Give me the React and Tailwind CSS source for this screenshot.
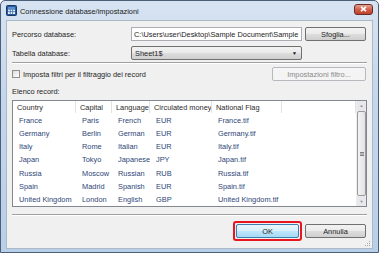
import React from "react";

const rows = [
  ["France", "Paris", "French", "EUR", "France.tif"],
  ["Germany", "Berlin", "German", "EUR", "Germany.tif"],
  ["Italy", "Rome", "Italian", "EUR", "Italy.tif"],
  ["Japan", "Tokyo", "Japanese", "JPY", "Japan.tif"],
  ["Russia", "Moscow", "Russian", "RUB", "Russia.tif"],
  ["Spain", "Madrid", "Spanish", "EUR", "Spain.tif"],
  ["United Kingdom", "London", "English", "GBP", "United Kingdom.tif"],
];
const rowH = ["h-[13px]", "h-[13px]", "h-[13px]", "h-[14px]", "h-[13px]", "h-[13px]", "h-[13px]"];

const btn =
  "flex items-center justify-center rounded-[2px] border border-[#707070] bg-[linear-gradient(#f2f2f2_0%,#ebebeb_48%,#dddddd_52%,#cfcfcf_100%)] text-[#1e1e1e]";

export default function App() {
  return (
    <div
      className="w-[379px] h-[253px] overflow-hidden bg-white"
      style={{ fontFamily: '"Liberation Sans", Arial, sans-serif' }}
    >
      <div className="w-[379px] h-[253px] rounded-t-[5px] border border-[#4a5f78] bg-[linear-gradient(#d7e3f1,#c4d6ec_40%,#b9cfe8)] flex flex-col">
        {/* title bar */}
        <div className="h-[19px] flex items-center pl-[5px] pr-[5px] shrink-0">
          <svg width="11" height="11" viewBox="0 0 11 11" className="shrink-0">
            <rect x="0.5" y="0.5" width="10" height="10" rx="1" fill="#2a5a9a" stroke="#163a6a" />
            <rect x="2" y="2" width="7" height="7" fill="#e8f0fa" />
            <path d="M2 4.3h7M2 6.6h7M4.3 4.3v4.7M6.6 4.3v4.7" stroke="#3b6fb0" strokeWidth="0.8" />
            <rect x="2" y="2" width="7" height="2" fill="#5b8fd0" />
          </svg>
          <span className="ml-[3px] mt-[1px] text-[7.4px] leading-[9px] text-[#1b1b1b]">Connessione database/impostazioni</span>
          <div className="ml-auto mt-[-3px] w-[19px] h-[11px] rounded-[3px] border border-[#6b2a22] bg-[linear-gradient(#e6a393,#d0604a_50%,#c0402c)] flex items-center justify-center">
            <svg width="7" height="6" viewBox="0 0 7 6">
              <path d="M1 0.8L6 5.2M6 0.8L1 5.2" stroke="#ffffff" strokeWidth="1.6" />
            </svg>
          </div>
        </div>
        {/* client */}
        <div className="mx-[5px] h-[229px] bg-[#f0f0f0] border border-[#aab8c8] flex flex-col text-[7.4px] leading-[9px] text-[#1e1e1e] relative">
          {/* row 1 */}
          <div className="mt-[6px] h-[14px] flex items-center">
            <span className="ml-[5px] w-[119px]">Percorso database:</span>
            <div className="w-[171px] h-[14px] bg-white border border-[#abadb3] flex items-center pl-[2px] overflow-hidden whitespace-nowrap">
              C:\Users\user\Desktop\Sample Document\Sample
            </div>
            <div className={btn + " ml-[3px] w-[61px] h-[14px]"}>Sfoglia...</div>
          </div>
          {/* row 2 */}
          <div className="mt-[5px] h-[14px] flex items-center">
            <span className="ml-[5px] w-[119px]">Tabella database:</span>
            <div className={"w-[171px] h-[14px] rounded-[2px] border border-[#707070] bg-[linear-gradient(#f2f2f2_0%,#ebebeb_48%,#dddddd_52%,#cfcfcf_100%)] flex items-center pl-[3px] pr-[4px]"}>
              <span>Sheet1$</span>
              <span className="ml-auto text-[5px] text-[#111]">▼</span>
            </div>
          </div>
          {/* separator */}
          <div className="mt-[2px] ml-[5px] w-[355px] h-[2px] border-t border-[#a0a0a0] border-b border-b-white" />
          {/* checkbox row */}
          <div className="mt-[3px] h-[14px] flex items-center">
            <div className="ml-[5px] w-[8px] h-[8px] border border-[#8e8f8f] bg-[linear-gradient(135deg,#dcdcdc,#ffffff)]" />
            <span className="ml-[3px]">Imposta filtri per il filtraggio dei record</span>
            <div className="ml-auto mr-[6px] w-[94px] h-[14px] rounded-[2px] border border-[#b5b9bd] bg-[#f4f4f4] text-[#8a8a8a] flex items-center justify-center">
              Impostazioni filtro...
            </div>
          </div>
          {/* Elenco record */}
          <div className="mt-[6px] ml-[5px] h-[9px] flex items-center">Elenco record:</div>
          {/* list */}
          <div className="mt-[4px] ml-[5px] w-[355px] h-[107px] border border-[#828790] bg-white flex">
            <div className="flex-1 flex flex-col">
              <div className="h-[12px] grid grid-cols-[63px_36px_38px_62px_70px_1fr] text-[#2b2b2b]">
                {["Country", "Capital", "Language", "Circulated money", "National Flag", ""].map((h, i) => (
                  <div key={i} className="border-r border-[#e2e2e2] pl-[4px] flex items-center whitespace-nowrap overflow-hidden">
                    {h}
                  </div>
                ))}
              </div>
              <div className="mt-[1px]">
                {rows.map((r, i) => (
                  <div key={i} className={rowH[i] + " grid grid-cols-[63px_36px_38px_62px_70px_1fr] text-[#2d4677]"}>
                    {r.map((c, j) => (
                      <div key={j} className="pl-[6px] pt-[2px] whitespace-nowrap overflow-hidden">
                        {c}
                      </div>
                    ))}
                    <div />
                  </div>
                ))}
              </div>
            </div>
            {/* scrollbar */}
            <div className="w-[10px] h-full bg-[#e8e8ec] border-l border-[#ededed] flex flex-col items-center">
              <div className="h-[9px] flex items-center justify-center text-[4px] text-[#8a8a8a]">▲</div>
              <div className="w-[9px] flex-1 my-[1px] rounded-[2px] border border-[#9a9a9a] bg-[linear-gradient(90deg,#f3f3f3,#e2e2e2)] flex items-center justify-center">
                <svg width="4" height="4" viewBox="0 0 4 4">
                  <path d="M0 0.5h4M0 2h4M0 3.5h4" stroke="#555" strokeWidth="0.7" />
                </svg>
              </div>
              <div className="h-[9px] flex items-center justify-center text-[4px] text-[#8a8a8a]">▼</div>
            </div>
          </div>
          {/* separator */}
          <div className="mt-[7px] ml-[5px] w-[355px] h-[2px] border-t border-[#a0a0a0] border-b border-b-white" />
          {/* buttons */}
          <div className="mt-[5px] flex items-center justify-end pr-[6px]">
            <div className="rounded-[3px] border-2 border-[#e8141e] p-[1px]">
              <div className="w-[63px] h-[14px] rounded-[2px] border border-[#3c7fb1] bg-[linear-gradient(#eaf6fd_0%,#d9f0fc_48%,#bee6fd_52%,#a7d9f5_100%)] flex items-center justify-center text-[#1e1e1e]">
                OK
              </div>
            </div>
            <div className={btn + " ml-[3px] w-[61px] h-[14px]"}>Annulla</div>
          </div>
          <svg width="8" height="8" viewBox="0 0 8 8" className="absolute right-[1px] bottom-[1px]">
            {[[6, 2], [4, 4], [6, 4], [2, 6], [4, 6], [6, 6]].map(([x, y], i) => (
              <rect key={i} x={x} y={y} width="1" height="1" fill="#a0a8b4" />
            ))}
          </svg>
        </div>
      </div>
    </div>
  );
}
